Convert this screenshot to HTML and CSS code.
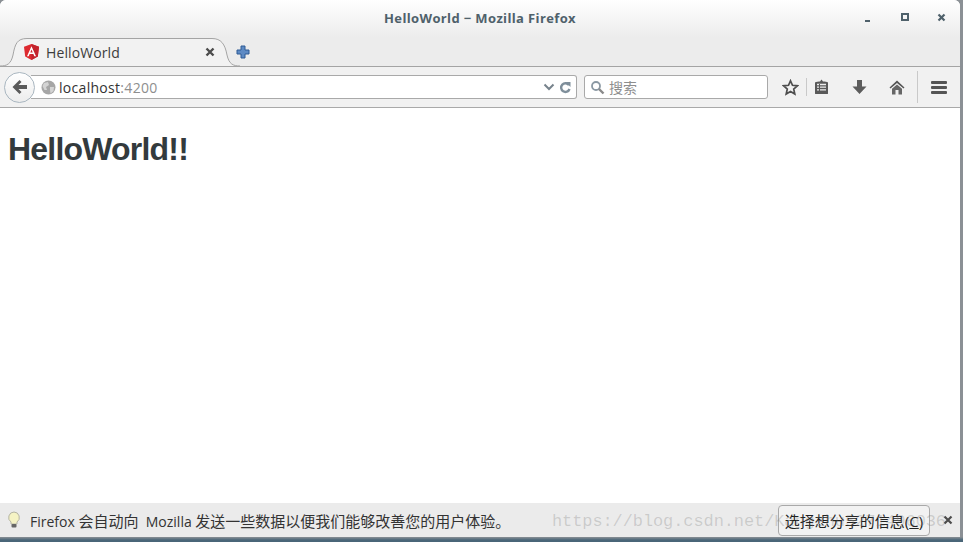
FILE: index.html
```html
<!DOCTYPE html>
<html lang="en">

<head>
    <meta charset="UTF-8">
    <title>HelloWorld</title>
    <link rel="stylesheet" href="styles.css">
</head>

<body>
    <div class="window">
        <div class="titlebar">
            <div class="title">HelloWorld − Mozilla Firefox</div>
            <div class="win-buttons">
                <svg width="12" height="12" viewBox="0 0 12 12"><rect x="3" y="8" width="5" height="2" fill="#4f616b"></rect></svg>
                <svg width="12" height="12" viewBox="0 0 12 12"><rect x="3" y="2" width="6" height="6" fill="none" stroke="#4f616b" stroke-width="2"></rect></svg>
                <svg width="12" height="12" viewBox="0 0 12 12"><path d="M2.5 2.5l6 6M8.500 2.500l-6 6" stroke="#4f616b" stroke-width="2.200"></path></svg>
            </div>
        </div>

        <div class="tabbar">
            <div class="tab">
                <svg class="tab-shape" width="240" height="29" viewBox="0 0 240 29">
                    <path d="M0 28C7 28 11 26 13 17C15 6 17 0.500 27 0.500H212C221 0.500 225 6 227 17C229 26 233 28 240 28" fill="#f2f2f2" stroke="#a4a4a4"></path>
                </svg>
                <svg class="angular" width="15" height="16" viewBox="0 0 15 16">
                    <path d="M7.500 0L15 2.700L13.800 12.600L7.500 16L1.200 12.600L0 2.700Z" fill="#dd2a30"></path>
                    <path d="M7.500 0L15 2.700L13.800 12.600L7.500 16Z" fill="#c3232c"></path>
                    <path d="M7.500 2.200L3 12.300H4.700L5.600 10H9.400L10.300 12.300H12L7.500 2.200ZM6.300 8.600L7.500 5.600L8.700 8.600Z" fill="#fff"></path>
                </svg>
                <span class="tab-label">HelloWorld</span>
                <svg class="tab-close" width="10" height="10" viewBox="0 0 10 10"><path d="M1.500 1.500l7 7M8.500 1.500l-7 7" stroke="#4c4c4c" stroke-width="2.400"></path></svg>
            </div>
            <svg class="new-tab" width="14" height="14" viewBox="0 0 14 14">
                <path d="M5 1H9V5H13V9H9V13H5V9H1V5H5Z" fill="#5d8ac4" stroke="#2f5a94"></path>
            </svg>
        </div>

        <div class="navbar">
            <div class="back">
                <svg width="18" height="16" viewBox="0 0 18 16"><path d="M8.500 1L1.500 8L8.500 15L10.500 13L7.500 10H16V6H7.500L10.500 3Z" fill="#5a5a5a"></path></svg>
            </div>
            <div class="urlbar">
                <svg class="globe" width="15" height="15" viewBox="0 0 15 15">
                    <circle cx="7.500" cy="7.500" r="7" fill="#a6a6a6"></circle>
                    <path d="M3 3L7 2L8 5L5 7L6 10L3.500 10L1.500 6ZM9 7L13 7L12.500 11L9.500 13.500L9 10Z" fill="#d4d4d4"></path>
                </svg>
                <span class="host">localhost</span><span class="port">:4200</span>
                <svg class="chevron" width="12" height="8" viewBox="0 0 12 8"><path d="M1.500 1.500L6 6L10.500 1.500" fill="none" stroke="#77838c" stroke-width="2"></path></svg>
                <svg class="reload" width="12" height="13" viewBox="0 0 12 13"><path d="M10 4.200A4.300 4.300 0 1 0 10.500 8" fill="none" stroke="#7f8f9b" stroke-width="2.400"></path><path d="M6.500 1H11.500V6Z" fill="#7f8f9b"></path></svg>
            </div>
            <div class="searchbar">
                <svg width="15" height="15" viewBox="0 0 15 15"><circle cx="6" cy="6" r="4" fill="#fff" stroke="#8a98a3" stroke-width="1.800"></circle><path d="M9 9L13.500 13.500" stroke="#8a8a8a" stroke-width="2.400"></path></svg>
                <span>搜索</span>
            </div>
            <div class="tools">
                <svg class="star" width="17" height="17" viewBox="0 0 17 17"><path d="M8.500 1.800L10.500 6.300L15.400 6.800L11.700 10L12.800 15L8.500 12.400L4.200 15L5.300 10L1.600 6.800L6.500 6.300Z" fill="none" stroke="#4e4e4e" stroke-width="1.700"></path></svg>
                <i class="sep"></i>
                <svg class="clip" width="15" height="16" viewBox="0 0 15 16"><path d="M5 2.500H6L7.500 0.500L9 2.500H10.500Q14 2.500 14 4V14.500Q14 15 13 15H2Q1 15 1 14.500V4Q1 2.500 5 2.500Z" fill="#595959"></path><path d="M3 5.500H12M3 8.200H12M3 10.900H12" stroke="#eee" stroke-width="1.300"></path><path d="M5.500 5V13" stroke="#595959" stroke-width="1"></path></svg>
                <svg class="down" width="15" height="16" viewBox="0 0 15 16"><path d="M5 1H10V7.500H14.500L7.500 15L0.500 7.500H5Z" fill="#5c5c5c"></path></svg>
                <svg class="home" width="16" height="15" viewBox="0 0 16 15"><path d="M8 0.500L15.500 7.500L14.500 8.500L8 3L1.500 8.500L0.500 7.500Z" fill="#555"></path><path d="M8 4.500L13 8.800V14.500H9.500V10H6.500V14.500H3V8.800Z" fill="#666"></path></svg>
                <i class="sep tall"></i>
                <div class="hamburger"><b></b><b></b><b></b></div>
            </div>
        </div>

        <div class="content">
            <h1>HelloWorld!!</h1>
        </div>

        <div class="notice">
            <svg class="bulb" width="14" height="18" viewBox="0 0 14 18">
                <path d="M7 1A5.500 5.500 0 0 1 10 11V13H4V11A5.500 5.500 0 0 1 7 1Z" fill="#f5f3c4" stroke="#b4b4a4"></path>
                <rect x="4.500" y="13" width="5" height="3.500" rx="1" fill="#666"></rect>
            </svg>
            <span class="notice-text">Firefox <span class="cjk">会自动向</span>&nbsp; Mozilla <span class="cjk">发送一些数据以便我们能够改善您的用户体验。</span></span>
            <button class="notice-btn">选择想分享的信息(<u>C</u>)</button>
            <svg class="notice-close" width="10" height="10" viewBox="0 0 10 10"><path d="M1.500 1.500l7 7M8.500 1.500l-7 7" stroke="#4c4c4c" stroke-width="2.200"></path></svg>
        </div>
        <div class="watermark">https://blog.csdn.net/Kangzhu5271496036</div>
    </div>
</body>

</html>
```

FILE: styles.css
```css
* {
    box-sizing: border-box;
}

html,
body {
    height: 100%;
}

body {
    margin: 0;
    overflow: hidden;
    background: linear-gradient(#8b9095 537px, #4a6678 540px);
    font-family: "Open Sans", "Noto Sans CJK SC", sans-serif;
}

.window {
    position: relative;
    display: flex;
    flex-direction: column;
    width: 960px;
    height: 537px;
    background: #fff;
    border-radius: 6px 6px 0 0;
    overflow: hidden;
}

.titlebar {
    display: flex;
    align-items: center;
    justify-content: center;
    position: relative;
    height: 38px;
    flex-shrink: 0;
    background: linear-gradient(#ffffff, #ececec);
}

.title {
    font-size: 13px;
    font-weight: 700;
    letter-spacing: 0.37px;
    color: #4f616b;
    margin-top: -2px;
}

.win-buttons {
    position: absolute;
    right: 12px;
    top: 12px;
    display: flex;
    gap: 25px;
}

.tabbar {
    display: flex;
    align-items: center;
    position: relative;
    height: 29px;
    flex-shrink: 0;
    background: #ececec;
    border-bottom: 1px solid #a4a4a4;
}

.tab {
    position: relative;
    display: flex;
    align-items: center;
    width: 228px;
    height: 29px;
    padding: 0 11px 0 24px;
}

.tab-shape {
    position: absolute;
    left: 0;
    top: 0;
}

.angular,
.tab-label,
.tab-close {
    position: relative;
}

.tab-label {
    margin-left: 7px;
    font-size: 14px;
    letter-spacing: 0.1px;
    color: #3c3c3c;
    flex: 1;
}

.tab-close {
    margin-right: 2px;
}

.new-tab {
    margin-left: 8px;
}

.navbar {
    display: flex;
    align-items: center;
    position: relative;
    height: 41px;
    flex-shrink: 0;
    padding-left: 4px;
    background: #f1f1f1;
    border-bottom: 1px solid #a9a9a9;
}

.back {
    position: relative;
    z-index: 1;
    display: flex;
    align-items: center;
    justify-content: center;
    width: 31px;
    height: 31px;
    border: 1px solid #a9b6c0;
    border-radius: 50%;
    background: linear-gradient(#ffffff, #ececec);
}

.urlbar {
    display: flex;
    align-items: center;
    width: 546px;
    height: 24px;
    margin-left: -4px;
    padding: 0 5px 0 10px;
    background: #fff;
    border: 1px solid #a9a9a9;
    border-left: 0;
    border-radius: 0 3px 3px 0;
    font-size: 14px;
    letter-spacing: 0.3px;
}

.globe {
    margin-right: 3px;
}

.host {
    color: #333;
}

.port {
    color: #8e8e8e;
    flex: 1;
}

.chevron {
    margin-right: 4px;
}

.searchbar {
    display: flex;
    align-items: center;
    gap: 4px;
    width: 184px;
    height: 24px;
    margin-left: 7px;
    padding-left: 5px;
    background: #fff;
    border: 1px solid #a9a9a9;
    border-radius: 3px;
    font-size: 14px;
    color: #8e8e8e;
}

.tools {
    display: flex;
    align-items: center;
    flex: 1;
    height: 100%;
    padding-left: 14px;
}

.sep {
    width: 1px;
    height: 18px;
    margin: 0 7px 0 7px;
    background: #c9c9c9;
}

.sep.tall {
    height: 32px;
    margin: 0 13px 0 12px;
}

.down {
    margin-left: 23px;
}

.home {
    margin-left: 22px;
}

.hamburger {
    display: flex;
    flex-direction: column;
    gap: 2px;
    width: 16px;
}

.hamburger b {
    display: block;
    height: 3px;
    border-radius: 1px;
    background: #555;
}

.content {
    flex: 1;
    padding: 0 8px;
}

h1 {
    margin: 21px 0 0;
    font-family: "Liberation Sans", sans-serif;
    font-size: 32px;
    line-height: 40px;
    font-weight: 700;
    letter-spacing: -0.8px;
    color: #333a3d;
}

.notice {
    display: flex;
    align-items: center;
    height: 34px;
    flex-shrink: 0;
    padding-left: 7px;
    background: #ebebeb;
    font-size: 14px;
    color: #333;
}

.bulb {
    margin-right: 9px;
}

.notice-text {
    flex: 1;
}

.cjk {
    font-size: 15px;
}

.notice-btn {
    width: 152px;
    height: 31px;
    padding: 0;
    margin-right: 13px;
    background: #f2f2f2;
    border: 1px solid #a9a9a9;
    border-radius: 4px;
    font: inherit;
    font-size: 15px;
    color: #222;
}

.notice-close {
    margin-right: 7px;
}

.watermark {
    position: absolute;
    left: 552px;
    top: 510px;
    font-family: "Liberation Mono", monospace;
    font-size: 17px;
    line-height: 24px;
    letter-spacing: -0.1px;
    color: rgba(120, 120, 120, 0.28);
    white-space: nowrap;
    pointer-events: none;
}
```
